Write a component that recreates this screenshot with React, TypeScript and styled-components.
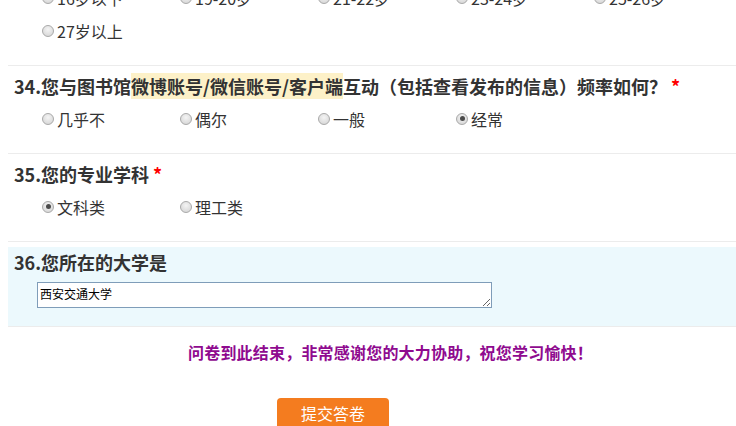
import React from "react";
import styled, { createGlobalStyle } from "styled-components";

const Global = createGlobalStyle`
  html, body { margin: 0; padding: 0; background: #fff; overflow: hidden; }
  body { font-family: "Microsoft YaHei", "Noto Sans CJK SC", "Noto Sans", sans-serif; color: #333; }
`;

const Page = styled.div`
  margin-top: -19px;
  padding-left: 8px;
  width: 728px;
`;

const Section = styled.div<{ $tint?: boolean; $flush?: boolean }>`
  padding: ${(p) => (p.$flush ? "0 0 18px 6px" : p.$tint ? "2px 0 18px 6px" : "7px 0 18px 6px")};
  margin-top: ${(p) => (p.$tint ? "5px" : "0")};
  background: ${(p) => (p.$tint ? "#ecf9fd" : "transparent")};
  border-bottom: 1px solid #ececec;
`;

const Title = styled.div`
  font-size: 18px;
  font-weight: bold;
  line-height: 26px;
  color: #333;
  white-space: nowrap;
`;

const Mark = styled.span`
  background: #fdf1c8;
`;

const Star = styled.span`
  color: #f00;
  margin-left: 4px;
`;

const Options = styled.div<{ $top?: number }>`
  display: grid;
  grid-template-columns: repeat(5, 138px);
  padding-left: 28px;
  margin-top: ${(p) => p.$top ?? 3}px;
`;

const Option = styled.label`
  display: flex;
  align-items: center;
  height: 33px;
  font-size: 16px;
  color: #333;
  white-space: nowrap;
`;

const Radio = styled.input.attrs({ type: "radio" })`
  appearance: none;
  -webkit-appearance: none;
  width: 12px;
  height: 12px;
  margin: 0 3px 0 0;
  border-radius: 50%;
  border: 1px solid #a9a9a9;
  box-sizing: border-box;
  background: radial-gradient(circle at 50% 35%, #f4f4f4 0%, #dcdcdc 70%, #cfcfcf 100%);
  position: relative;
  flex: none;
  &:checked::after {
    content: "";
    position: absolute;
    left: 2.5px;
    top: 2.5px;
    width: 5px;
    height: 5px;
    border-radius: 50%;
    background: #4a4a4a;
  }
`;

const TextBox = styled.textarea`
  display: block;
  margin: 7px 0 0 23px;
  width: 455px;
  height: 26px;
  box-sizing: border-box;
  border: 1px solid #7f9db9;
  padding: 3px 2px;
  font-size: 12px;
  line-height: 16px;
  font-family: "Microsoft YaHei", "Noto Sans CJK SC", sans-serif;
  color: #000;
  resize: both;
  overflow: hidden;
  background: #fff;
`;

const Footer = styled.div`
  display: flex;
  flex-direction: column;
  align-items: flex-start;
`;

const Message = styled.div`
  margin: 13px 0 0 180px;
  font-size: 16px;
  letter-spacing: 0.2px;
  line-height: 24px;
  font-weight: bold;
  color: #8f0a8f;
  white-space: nowrap;
`;

const Submit = styled.button`
  margin: 34px 0 0 269px;
  width: 112px;
  height: 36px;
  border: none;
  border-radius: 4px;
  background: #f47c1f;
  color: #fff;
  font-size: 16px;
  font-family: "Microsoft YaHei", "Noto Sans CJK SC", sans-serif;
  padding: 0 0 6px;
  line-height: 28px;
`;

type Opt = { label: string; checked?: boolean };

const Group = ({ name, opts, top }: { name: string; opts: Opt[]; top?: number }) => (
  <Options $top={top}>
    {opts.map((o) => (
      <Option key={o.label}>
        <Radio name={name} defaultChecked={o.checked} />
        {o.label}
      </Option>
    ))}
  </Options>
);

export default function App() {
  return (
    <>
      <Global />
      <Page>
        <Section $flush>
          <Group
            name="q33"
            top={0}
            opts={[
              { label: "16岁以下" },
              { label: "19-20岁" },
              { label: "21-22岁" },
              { label: "23-24岁" },
              { label: "25-26岁", checked: true },
              { label: "27岁以上" },
            ]}
          />
        </Section>
        <Section>
          <Title>
            34.您与图书馆<Mark>微博账号/微信账号/客户端</Mark>互动（包括查看发布的信息）频率如何？<Star>*</Star>
          </Title>
          <Group
            name="q34"
            opts={[{ label: "几乎不" }, { label: "偶尔" }, { label: "一般" }, { label: "经常", checked: true }]}
          />
        </Section>
        <Section>
          <Title>
            35.您的专业学科<Star>*</Star>
          </Title>
          <Group name="q35" opts={[{ label: "文科类", checked: true }, { label: "理工类" }]} />
        </Section>
        <Section $tint>
          <Title>36.您所在的大学是</Title>
          <TextBox defaultValue="西安交通大学" />
        </Section>
        <Footer>
          <Message>问卷到此结束，非常感谢您的大力协助，祝您学习愉快！</Message>
          <Submit>提交答卷</Submit>
        </Footer>
      </Page>
    </>
  );
}
